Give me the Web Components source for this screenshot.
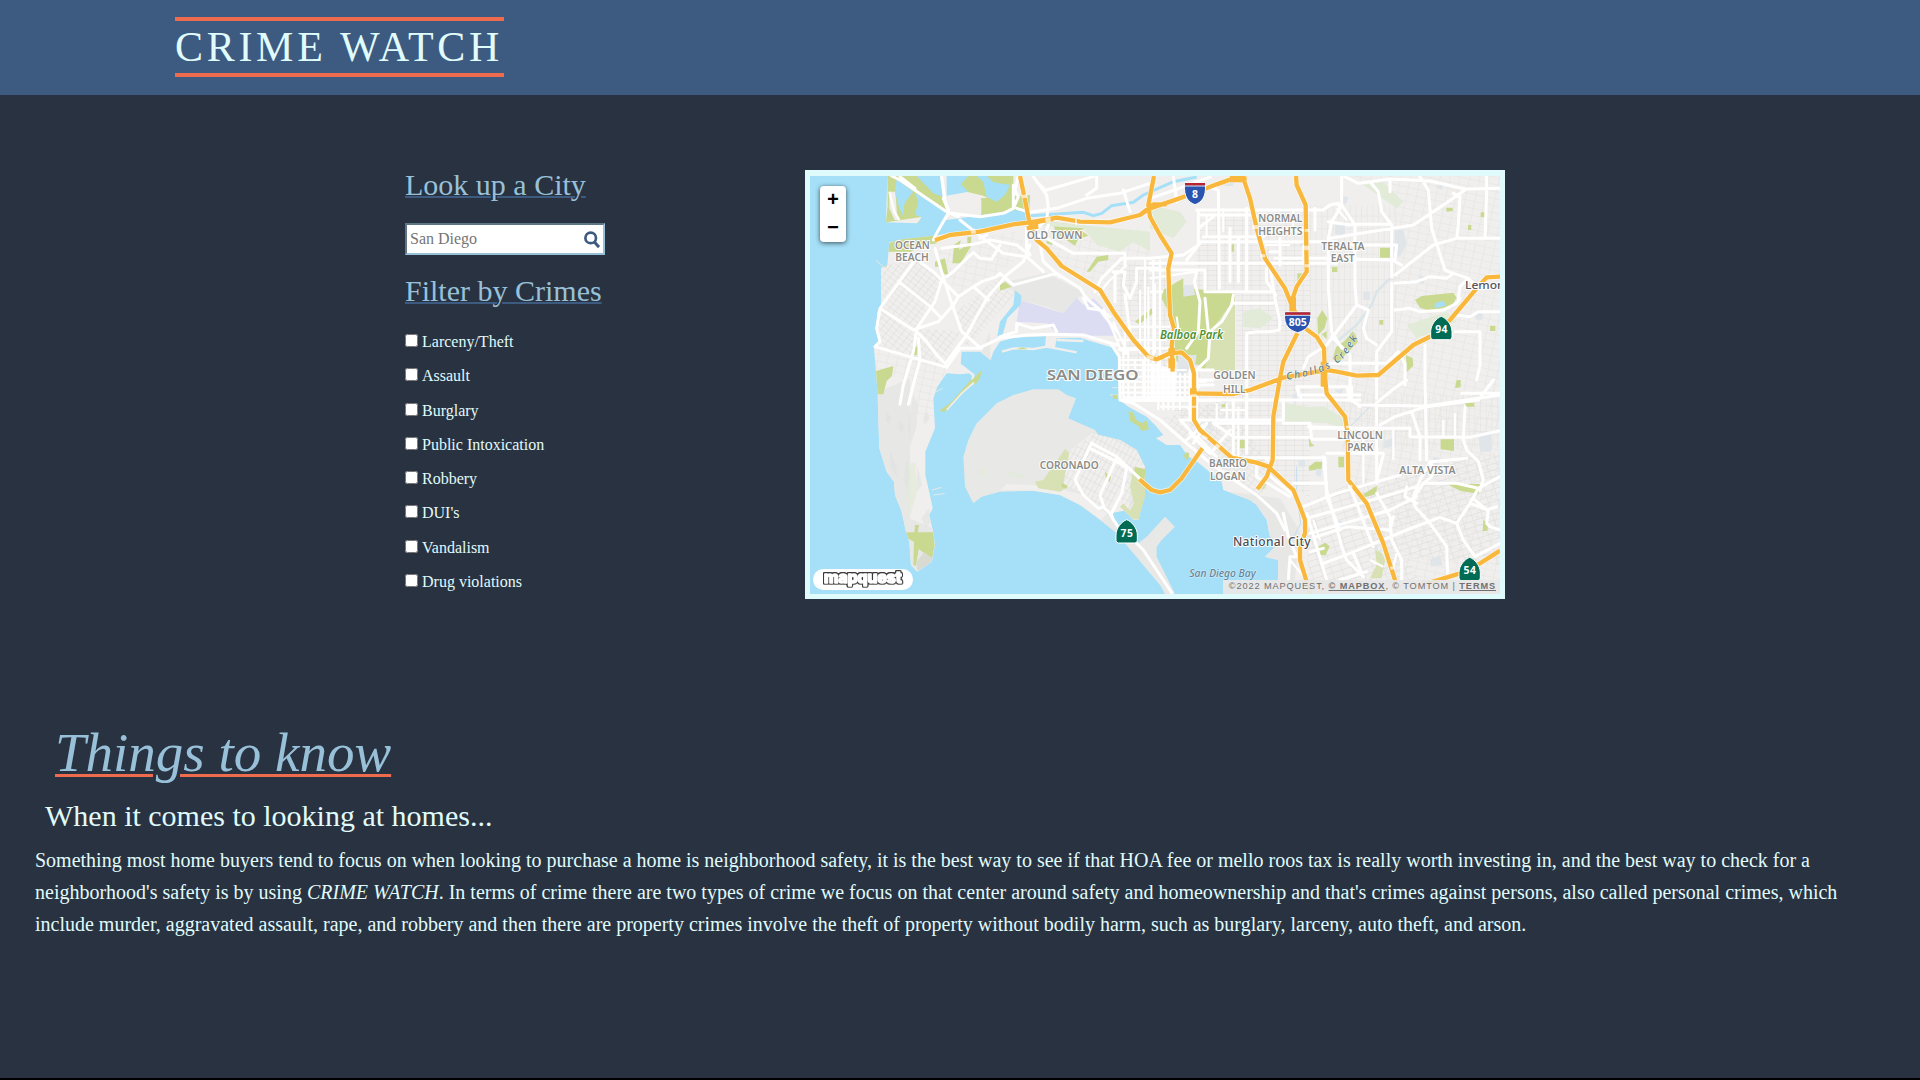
<!DOCTYPE html>
<html lang="en">
<head>
<meta charset="utf-8">
<title>Crime Watch</title>
<style>
html{background:#000}
body{margin:0;font-family:"Liberation Serif",serif;color:#e0fbfc;overflow:hidden}
</style>
</head>
<body>
<crime-app></crime-app>
<script>
const define=(name,html,setup)=>customElements.define(name,class extends HTMLElement{
  constructor(){
    super();
    const t=document.createElement('template');
    t.innerHTML=html;
    this.attachShadow({mode:'open'}).append(t.content.cloneNode(true));
    if(setup)setup(this,this.shadowRoot);
  }
});

define('site-header',`<style>
:host{display:block;box-sizing:border-box;height:95px;padding:17px 0 0 175px;background:#3d5a80}
h1{box-sizing:border-box;width:329px;height:60px;margin:0;border:solid #ee6c4d;border-width:4px 0;font-weight:400;font-size:42px;line-height:52px;letter-spacing:3.7px;white-space:nowrap}
</style><h1><slot></slot></h1>`);

define('section-title',`<style>
:host{display:block;height:34px}
h2{margin:0;font-weight:400;font-size:30px;line-height:34px;color:#98c1d9;text-decoration:underline 2px #3d5a80;text-underline-offset:1px;white-space:nowrap}
</style><h2><slot></slot></h2>`);

define('city-search',`<style>
:host{display:block;box-sizing:border-box;width:200px;height:32px;border:2px inset #98c1d9;background:#fff}
div{display:flex;align-items:center;justify-content:space-between;height:28px;padding:0 3px}
span{font-size:16px;line-height:18px;color:#757575}
svg{display:block}
</style><div><span><slot></slot></span><svg width="17" height="18" viewBox="0 0 17 18"><circle cx="7.7" cy="7.9" r="5.3" fill="none" stroke="#3d5a80" stroke-width="2.7"/><path d="M11.4 12L16 17.2" stroke="#3d5a80" stroke-width="3"/></svg></div>`);

define('crime-option',`<style>
:host{display:block;height:34.3px}
label{display:block;font-size:16px;line-height:18px;white-space:nowrap}
input{margin:0 4px 0 0;width:13px;height:13px;vertical-align:0}
</style><label><input type="checkbox"><slot></slot></label>`);

define('filter-panel',`<style>
:host{display:flex;flex-direction:column;width:200px}
city-search{margin:21px 0 19px}
.list{margin-top:25px}
</style>
<section-title>Look up a City</section-title>
<city-search>San Diego</city-search>
<section-title>Filter by Crimes</section-title>
<div class="list"></div>`,(h,r)=>{
  for(const n of ["Larceny/Theft","Assault","Burglary","Public Intoxication","Robbery","DUI's","Vandalism","Drug violations"]){
    const o=document.createElement('crime-option');o.textContent=n;r.querySelector('.list').append(o);
  }
});

define('map-zoom',`<style>
:host{display:flex;flex-direction:column;width:26px;height:56px;border-radius:4px;background:#fff;box-shadow:0 1px 5px rgba(0,0,0,.65);overflow:visible}
span{display:block;box-sizing:border-box;height:28px;font:bold 20px/29px "Liberation Mono",monospace;text-align:center;color:#000}
span:first-child{border-bottom:1px solid #ccc}
</style><span>+</span><span>−</span>`);

define('map-credit',`<style>
:host{display:flex;justify-content:flex-end;box-sizing:border-box;width:277px;height:14px;padding-right:4px;background:rgba(232,232,232,.94);font:9.2px/12px "Liberation Sans",sans-serif;letter-spacing:.9px;color:#707070;white-space:pre}
b{text-decoration:underline;text-underline-offset:1px}
</style><span>©2022 MAPQUEST, <b>© MAPBOX</b>, © TOMTOM | <b>TERMS</b></span>`);

/* Map artwork: units are thirds of a pixel. Quadrant groups share the offsets below. */
const NE='transform="translate(1050 0)"',SW='transform="translate(0 645)"',SE='transform="translate(1050 645)"',MID='transform="translate(600 435)"';
const grid=(id,w,h,a,c)=>`<pattern id="${id}" width="${w}" height="${h}" patternUnits="userSpaceOnUse" patternTransform="rotate(${a})"><path d="M0 0H${w}M0 0V${h}" stroke="${c}" stroke-width="3.4" fill="none"/></pattern>`;
const label=(x,y,w,s,t,extra='')=>`<text x="${x}" y="${y}" textLength="${w}" lengthAdjust="spacingAndGlyphs" font-size="${s}" ${extra}>${t}</text>`;
const inter=(x,y,w,h,t,tw)=>`<g transform="translate(${x} ${y})"><path d="M${-w/2} ${-h/2+3}L${-w/2+4} ${-h/2}H${w/2-4}L${w/2} ${-h/2+3}C${w/2+4} ${h*.2} ${w*.28} ${h*.4} 0 ${h/2}C${-w*.28} ${h*.4} ${-w/2-4} ${h*.2} ${-w/2} ${-h/2+3}Z" fill="#2a54b0" stroke="#fff" stroke-width="3"/><path d="M${-w/2+1} ${-h/2+1}H${w/2-1}V${-h/2+9}H${-w/2+1}Z" fill="#b9222f"/><path d="M${-w/2+1} ${-h/2+10}H${w/2-1}" stroke="#fff" stroke-width="2.5"/><text x="0" y="12" class="sh" text-anchor="middle" textLength="${tw}" lengthAdjust="spacingAndGlyphs" font-size="31">${t}</text></g>`;
const state=(x,y,t)=>`<g transform="translate(${x} ${y})"><path d="M0 -36C14 -31 32 -12 32 10V26Q32 34 24 34H-24Q-32 34 -32 26V10C-32 -12 -14 -31 0 -36Z" fill="#006c56" stroke="#fff" stroke-width="3"/><text x="0" y="15" class="sh" text-anchor="middle" textLength="37" font-size="31">${t}</text></g>`;

define('city-map',`<style>
:host{display:block;position:relative;box-sizing:border-box;width:700px;height:429px;border:solid #e0fbfc;border-width:6px 5px 5px}
svg{display:block}
.f{fill:none;stroke:#f9b83c;stroke-width:13;stroke-linejoin:round}
.c{fill:none;stroke:#fff;stroke-width:17;stroke-linejoin:round;opacity:.7}
.r{fill:none;stroke:#fff;stroke-width:9;stroke-linejoin:round;stroke-linecap:round}
.n{fill:none;stroke:#fff;stroke-width:6.5}
.g{fill:#c9d98f}.g2{fill:#d8e1b3}.g3{fill:#e2ebd8}.w{fill:#a5e0f8}.b{fill:#e0e5ea}
.t text{font-family:"Noto Sans",sans-serif;font-weight:600;fill:#8b8b87;stroke:#fff;stroke-width:6;stroke-linejoin:round;paint-order:stroke}
.sh{font-family:"Noto Sans",sans-serif;font-weight:700;fill:#fff}
.logo{filter:drop-shadow(2.6px 0 0 #3a3a3c) drop-shadow(-2.6px 0 0 #3a3a3c) drop-shadow(0 2.6px 0 #3a3a3c) drop-shadow(0 -2.6px 0 #3a3a3c)}
map-zoom{position:absolute;left:10px;top:10px}
map-credit{position:absolute;right:0;bottom:0}
</style>
<svg width="690" height="418" viewBox="30 33 2070 1254">
<defs>
${grid('ga',19,14,38,'#dedddc')}${grid('gb',26,15,0,'#e0dfdd')}${grid('gc',14,24,28,'#dcdcdc')}${grid('gd',30,18,-18,'#e0dfdd')}${grid('ge',17,38,0,'#e3e2e0')}${grid('gh',29,21,12,'#e4e3e1')}
<clipPath id="land"><path d="M268 232L310 222L400 212L480 200L600 180L690 165L1050 200V33H2100V1287H1433L1435 1185L1395 1175L1435 1135L1410 1115L1400 1065L1370 1020L1350 1005L1270 975L1265 950L1185 885L1165 875L1140 840L1100 840L1068 820L1090 810L1065 780L1040 755L985 725L958 705V570L945 550L870 528L840 518L770 520L765 548L735 545L738 514L640 518L600 530L580 560L572 585L540 560L485 560L482 600L510 625L478 628L440 625L412 665L400 700L405 790L376 860V930L392 1000L398 1030L388 1050L400 1105L405 1140L395 1190L352 1220L333 1200L328 1130L318 1100L305 1040L285 990L282 950L260 920L238 850L236 790L233 690L228 620L222 550L240 530L228 500L232 440L243 420V310L262 300Z"/></clipPath>
</defs>
<path class="w" d="M30 33H2100V1287H30Z"/>
<path fill="#f0efed" d="M262 33H2100V400H1000L690 165L690 148L540 158L440 172L340 188L345 175L258 172Z"/>
<g clip-path="url(#land)">
 <path fill="#f0efed" d="M30 33H2100V1287H30Z"/>
 <path fill="url(#ga)" d="M245 300L360 285L430 340L405 430L345 490L235 440ZM345 490L480 500L440 600L230 545L235 440ZM470 440L600 330L660 370L500 550Z"/>
 <path fill="url(#gh)" d="M220 540L440 600L400 760H350V650L220 620ZM690 165L1050 200V430L780 300ZM400 250L640 200L700 250L480 400Z"/>
 <path fill="url(#gb)" d="M940 300H1110V620H960ZM1190 130H1530V700H1310V380H1190ZM1310 640H1530V1000L1180 760ZM960 600H1200V800Z"/>
 <path fill="url(#ge)" d="M1530 120H1790V560H1530ZM1560 690H2100V850H1640Z"/>
 <path fill="url(#gh)" d="M1650 33H2100V560H1780V100ZM1560 560H2100V1287H1780L1650 950Z"/>
 <path fill="url(#gd)" d="M1510 1010L1700 940L1880 1287H1530ZM1720 940L2100 860V1200L1800 1180Z"/>
 <path fill="url(#ga)" d="M1090 760L1280 700L1430 940L1370 1000L1200 870Z"/>
 <path fill="#e7e7e6" d="M235 680L330 640L330 1060L398 1090L400 1210L330 1215L220 900ZM620 350L740 325L860 385L830 400L790 445L740 425L660 405ZM570 500L572 590L540 570ZM1290 980L1440 1000L1500 1100L1480 1287H1380Z"/>
 <path fill="#dddfdf" opacity=".5" d="M260 740l15 20-8 18-10-12zM300 770l12 12-6 22-12-16zM340 690l14 30-6 70-16 50-8-60zM370 760l12-20 6 20-14 22zM320 880l10 40-5 55-14-30zM270 860l18 40 5 40-20-32zM365 1060l22-30 5 40-14 20zM352 900l14 60-16 20z"/>
 <path fill="#dcddf2" d="M660 405L790 445L830 398L850 420L880 400L910 430L950 500L940 512L870 512L770 505L740 475L650 470Z"/>
 <path class="g" d="M262 236l55-20 95-6 0 25-40 5-40 20-70 0-2 45-12 0zM462 240l20-15-5 30 25-15 0-25 12 0-2 30-30 50-25 0zM405 290l30-10 10 50-20-5-5-20-15 0zM600 360l15-10 20 15-35 12zM336 545l18 0-4 25-14 0zM228 618l52-15-4 30-16 15-10 40h-20zM760 170l95 12-10 15 20 15-30 10-10 20-45-30-10 10zM740 225l20 5-4 10-16-5zM860 320l30-45 35-5 0 15-30 5-25 30zM1005 470l50-40 4 15-40 33zM318 1102h82l4 40-8 40-40-30-8 50-8-2 2-70-20-10zM345 1080h12l-4 25h-10z"/>
 <path fill="#d9dbd3" d="M350 1190L372 1162L398 1180L390 1200L352 1218Z"/>
 <path class="g3" opacity=".7" d="M326 895l20 0 6 80-20 75-12-50z"/>
 <path class="g2" d="M838 110L970 85L985 125L920 150L850 145Z"/>
 <path class="g3" d="M690 180L780 165L1020 170L1050 180L1050 260L1000 230L960 260L890 240L850 190ZM1050 120l90 20 20 30-40 50-70-30zM1690 60l60-10 60 60-20 20z"/>
 <g ${NE}>
  <path class="g" d="M100 370L255 380V530L250 600L240 618H160L150 600L80 590L60 450L35 400L40 375L100 340Z"/>
  <path class="g2" d="M180 500L255 400V615H165Z"/><path class="b" d="M100 360h30l5 30-35 5zM85 570h55l-5 30-55 50zM735 195h25l10 40-20 40-18-10z"/>
  <path class="g" d="M690 248h30v30h-30zM242 238h10v22h-10zM888 128h20v10l-18 2zM992 142h15v14h-15zM954 180h10v15h-10zM546 306h16v15h-16zM442 325h15l-4 25-11 0zM502 460l15-25 15 25-8 30-20 20zM548 582l10-35 25-18 25-30 8 10 8 22-38 38-20 22zM795 405l20-12 95-10 10 15-15 25-65 15-30-10zM768 570l20 10 2 22-20 20zM688 465h12v14h-12zM1020 482h16v16h-16zM515 508l15-10v25z"/>
  <path fill="#a9def8" d="M855 415l25-8 8 15-35 8z"/>
  <path class="b" d="M555 180h30v32l-30-5zM575 90l20 8-8 20-15-5zM810 330l15 8-5 20-14-5zM855 65l25-10-4 20zM390 130h30v15h-30zM450 225h16v20h-16zM640 380h20v25h-20zM980 440l20 8-5 18-20-4zM220 45h30v18h-30z"/>
  <path class="g3" d="M770 480L890 440L920 470L800 520ZM280 440l50-10 40 30-40 30-50-5z"/>
  <path fill="none" stroke="#d9e5ea" stroke-width="7" d="M720 340L680 380L665 420L620 480L560 530"/>
 </g>
 <g ${SE}>
  <path class="g3" d="M405 68L470 82L520 78L580 115L590 140L560 138L530 130L405 125Z"/>
  <path class="g" d="M270 180h14v25h-14zM872 178h40v35l-40-5zM565 230h17v32h-17zM476 260l20-15 22 0-4 22-36 5zM636 345l45-28-2 25-42 12zM505 500l20-12 14 10-12 28-18 0zM890 312h100l-5 30-55-10zM1000 420l15 8-3 25-14 0zM945 68h28v12h-24zM920 0h12v22l-17 2zM215 73h15v9h-15zM476 165l8 25 10 8-16 2zM100 215l18 5-8 18-10-5z"/>
  <path class="g2" d="M675 505l20 15 10 20-10 55-35 0 20-40zM330 300h25l-12 28h-15z"/>
  <path class="b" d="M700 185l35-15-4 30-30 5zM985 160l40-5-2 60-33 0zM560 420l30 10-5 20-20-4zM660 500l20-5 5 20zM840 540l30-15 8 30-35 5zM435 80l-10-35 20-8zM445 240h20v20h-20zM160 135l25-12 0 30zM555 30l25-4-5 25zM850 230l18 5-5 20-14-4zM500 265l16 5-4 20-15-5z"/>
  <path fill="none" stroke="#c4def0" stroke-width="3" d="M440 260v80l12 90-30 60M600 140l60-60"/>
 </g>
</g>
<path class="g" d="M262 33H370L440 110L446 138L420 170L340 188L368 155L258 172L263 120ZM543 100L690 90L688 148L543 158ZM490 33H640V95L600 120L550 92L500 80L440 88L480 60Z"/>
<path fill="#f0efed" d="M268 80h18l5 70 8 15-15 0-16-35zM440 100l50-14 54 18v40l-104 10zM690 33H900L850 90L720 110Z"/>
<path class="w" d="M290 42L340 80L322 102L312 120L310 155L295 120L285 80ZM345 84L435 135L435 168L350 182L365 155L345 150L355 110ZM350 33H420L428 95L400 85ZM440 33H505L482 58L505 80L440 92ZM530 33H560L580 52L630 60L615 90L590 110L560 95L550 50Z"/>
<path class="w" d="M300 180L440 165L690 130V168L480 200L310 222Z"/>
<path fill="none" stroke="#a5e0f8" stroke-width="9" d="M690 152L760 148L850 142L880 152L905 145L935 122L1000 112L1030 90L1120 50L1190 36"/>
<path class="w" d="M645 376L665 392L661 420L622 460L605 520L592 512L600 470L640 420Z"/>
<path fill="none" stroke="#f0efed" stroke-width="7" d="M606 560L640 550L700 552L740 545L830 562M482 600L520 630L516 660M770 525L850 528"/>
<path class="g" d="M516 645L545 615L540 640L525 660ZM648 553l20-6 15 6zM528 645l-55 55-38 40-18-2 35-25 60-68z"/>
<path fill="none" stroke="#f0efed" stroke-width="5" d="M522 652L485 685L440 735"/>
<path fill="none" stroke="#e6e8e8" stroke-width="3" d="M228 286l25 22M395 975l30-8M400 990l34-4M408 680l20-10M930 690h25M935 668h20"/>
<g ${SW}>
 <path fill="#e8e8e7" d="M490 230L505 180L530 130L590 70L640 45L700 28L775 28L800 45L828 55L805 115L885 150L895 165L960 180L1010 210L1035 260V345L1015 420L1000 420L960 380L945 395L932 405L960 440L1015 490L1040 470L1095 410L1125 440L1085 480L1070 500V530L1125 642H1095L1080 615L1050 580L1000 520L950 460L900 420L840 375L780 345L700 332L600 335L545 350L520 370L495 320Z"/>
 <path fill="#f0efed" d="M600 330L620 312L700 315L790 330L850 345L920 400L905 420L840 375L780 345L700 332Z"/>
 <path class="g3" opacity=".6" d="M540 265l20 5-10 22-15-8zM625 270l50 15 0 10-50-5z"/>
 <path fill="#f0efed" d="M800 220L875 160L960 180L1010 210L1035 262L1000 280L985 390L930 400L850 350L790 310Z"/>
 <path fill="url(#gc)" d="M800 220L885 160L960 180L1010 210L1030 250L1000 280V370L985 390L950 340L930 395L900 390L850 350L790 310Z"/>
 <path class="g2" d="M795 207L808 220L790 310L803 320L780 335L715 325L705 305L730 300ZM1000 262L1035 270L1035 350L1015 418L1000 418L960 380L970 370L990 392L1002 370L990 320Z"/>
 <path class="g" d="M1005 260L1037 268L1032 300L1005 290ZM915 275l18 15-4 15-12-10zM785 308l18 10-5 8-14-5z"/>
 <path class="r" d="M875 188L825 300L850 345L895 385L912 382L935 405L940 420M875 190L950 230L1022 298M870 205L960 250L980 265L965 340L932 405M950 235L900 345L912 382M932 405L960 450M1005 485L1030 510L1115 638"/>
</g>
<g ${MID}>
 <path class="g" d="M338 255l14 0 0 12h-12zM385 305l14 0 10 25 18 10 12-10 8 28-22 5-10-15-25-15zM550 435l14-8 4 14-10 10z"/>
</g>
<!-- streets -->
<path class="r" d="M275 33L300 45L380 100L440 140L475 155M300 35L345 70M425 36L435 105L447 140L410 205L400 225M430 100L442 130M655 33L645 75L655 95L640 130L610 145L540 155L455 145M650 130L690 142L770 130L860 100L960 85L1050 55M480 165L550 220L610 265L680 275L730 320M425 250L520 238L570 225L650 240L690 270L680 250V190M690 240L670 290L620 330L560 400L500 510L440 590M405 250L425 320L450 400L485 500L540 548L600 520L680 510L760 508L850 510L950 540M430 350L475 395L520 365L545 350L590 335L600 325L640 360L770 325L840 370L860 400L900 435L930 455M440 335L460 320L480 300L520 262L540 280L575 283L600 240M345 280L400 320L425 345M345 285L240 430L340 495L415 470L460 420L475 395M296 350L390 425L420 455M425 345L405 410L350 490L340 560L310 660L300 718M240 430L230 490L240 530L225 545L440 607L480 550H545M350 500L380 530L410 570L440 600M355 520L360 585L345 640L325 718M520 365L565 405M850 400L865 430L900 435L950 500M600 515L650 500V475L700 490L760 480L770 500M700 35L740 90L745 130L740 160L715 190M710 50L735 75M740 75L880 35M890 35V70L860 90M970 75L990 140M715 210L730 290L780 335M740 220L820 265H975V300M745 180L730 220M885 380L905 340L965 280H1050M940 320H975L970 360L990 400L1010 350V310H1080M945 320V410M975 390L990 500M560 210L540 220M640 130L640 60"/>
<path class="n" d="M268 80l15 60 15 25M1035 285V700M1060 285V700M1080 285V600M910 430l55 130M940 470l45 100M975 500v70M990 485H1110M955 550H1110M980 300l-55 50 -30 40"/>
<g ${NE}>
 <path class="r" d="M0 100L60 80L180 36M70 33L80 110M205 75L208 370M205 75L190 70M140 135H520L540 120L565 115L570 130L545 170L535 220V370L545 500L575 550M145 150H300M145 135V240L100 270L0 280M145 190L190 155M160 215H340M150 230H560M0 295H560M0 315H165M290 130V380M240 190V350M265 215V350M325 195H470M390 220V300M360 260H390M375 280H550M495 130V195M150 235L110 285M165 320V380M165 380H370M245 415H375M250 390L245 420L215 470L180 500L175 580L140 615M140 320L133 350L150 410L145 500L110 550M165 400L175 500M360 300L375 400L390 470L388 495L360 500H320L290 505V700M350 310V350L378 390M535 170L600 180M575 33V120L615 180V360L620 420L530 540L475 575L460 610M580 33L625 55L660 50L720 42L840 48L945 72L1050 70M660 50L685 80L695 140L725 180V335M720 45V80M810 36L835 75L845 190L885 315L910 325L955 340M945 75L880 120L790 180L600 210L540 220M605 178H720M600 240H740L735 285L620 283M735 290L755 300M735 330L850 240L920 220H1050M910 85L930 95L925 180L920 220M1010 33L1010 80L1005 220M735 355L800 350L840 335L890 340L910 325M735 435L780 430L810 440L880 435L920 415L930 400M725 355V500L680 560V700M620 420L655 435L640 490L650 520L680 540M545 515L600 570V660M540 595H710L745 560L765 595V660M985 440L960 455L920 450M985 440H1050M915 500H990V600L980 645M825 540V645M955 340L985 370M955 340L930 365L925 400"/>
 <path class="n" d="M320 150V190M220 130V200M170 150V215M460 240V300M0 340L140 320M0 380H40M560 130L590 165M345 240H420M430 135V195"/>
</g>
<g ${MID}>
 <path class="n" d="M370 120V270M385 115V270M405 150V270M430 150V270M445 140V270M455 160V270M475 150V300M490 170V300M505 160V300M520 180V300M540 190V300M555 190V270M360 150H450M360 165H480M360 180H560M360 200H580M360 215H620M360 232H600M360 248H580M370 262H580M380 272H660M480 290H570M355 120H450M420 -60V130M445 -70V130M465 -80V130M350 90H500"/>
 <path fill="#fff" opacity=".8" d="M470 160L530 185V265H455V190Z"/>
 <path class="r" d="M335 105L358 140L360 270L400 280L480 330L560 400L620 450L680 495L770 555L830 610L855 660M370 270H1080M590 180H640M590 210H640M590 225H640M540 330L560 350L600 400L650 440M545 330H850V270M570 180V330M590 190V340M700 270V470M740 270V430M645 340H820M700 382H930M700 443H975M850 340H930L935 388H1080M930 355H1080M640 340L700 380M690 360L640 420M620 340L580 400M570 370L630 430M560 390L610 345M770 470V500L870 560M800 490L880 555M975 443L980 560L1020 660M880 520H980M895 230V255H1080M1055 230V270L1080 290"/>
 <path class="n" d="M650 280V330M680 280V340M715 290V440M660 300H740M610 360L660 410M595 380L640 430M530 20L540 90M560 290L600 340"/>
</g>
<g ${SE}>
 <path class="r" d="M440 20H590L600 60L630 75L830 78L1050 45M440 22L455 60M680 70V310M600 0V60M680 68L740 20L770 0M825 0L830 240M475 140L600 145L780 145V170L960 172L1050 152M785 95L800 140L810 170V240M690 135L735 110L830 80L985 60M935 40H1050M985 60L1030 0M945 80L940 180L950 210L985 245L1000 300L990 330M530 220H700M700 223L680 300M840 245L810 300L790 350L795 380L840 430L890 500L893 590M845 245L950 235M845 245V290L820 310L790 355M820 310L920 310L985 325L1050 290M985 325L960 370L920 430L870 412L770 450L600 520L520 550M460 380L560 340L750 285M470 415L700 350L800 320M480 460L720 390L800 350M500 470L590 440L720 450L730 410M520 230L530 330L575 500L590 540L640 590M600 320L620 370L650 450L670 500M680 340L720 410L725 480L755 540V600M470 400L500 500L530 600M520 505L480 515M400 400L415 470L440 530L420 530L412 640M770 320L765 350L800 370M960 370L1015 390L1010 430L1020 440L1050 450M920 430L940 480L975 530L1050 490M975 360L1010 390L1040 380M610 520L640 590M570 600L650 575"/>
 <path class="n" d="M490 420L510 480M420 540L470 600M660 540L700 560M740 520L730 560M880 120V170M915 100V170M730 150V240M640 170V310"/>
</g>
<g id="fw"></g>
<g fill="#fff" opacity=".65"><path d="M735 158l16-2 2 14-16 2zM665 90l16-2 2 10-16 2zM512 193l14-2 2 14-14 2zM825 162h6v18h-6zM1356 180l18 0 0 12-16 0zM1380 268h16v9h-16zM1514 192h14v8h-14zM1512 242h16v12h-16zM1514 298h14v9h-14zM1515 250h10v6h-10zM1250 835l12 8-8 10-12-8zM1210 810l14 8-4 8-14-6zM1720 1130l14-4 3 8-14 5zM1770 1205l14-2 2 8-14 4zM1638 782h14v8h-14zM1645 960h12v8h-12zM1395 880l14 2-2 12-12-4zM1040 570l22 4-2 10-20-2zM1172 688h18v8h-18zM1172 722h18v6h-18z"/></g>
<g class="t">
${label(285,251,104,31,'OCEAN')}${label(286,288,100,31,'BEACH')}${label(680,221,167,32,'OLD TOWN')}
${label(740,645,276,45,'SAN DIEGO')}
<g ${NE}>${label(325,170,132,32,'NORMAL')}${label(325,209,132,32,'HEIGHTS')}${label(514,254,130,31,'TERALTA')}${label(542,291,72,31,'EAST')}${label(190,642,127,31,'GOLDEN')}
${label(945,372,119,34,'Lemon','style="fill:#55555a;font-weight:500"')}
${label(30,521,189,35,'Balboa Park','style="fill:#4c9133;font-style:italic"')}</g>
<g ${SE}>${label(219,38,68,31,'HILL')}${label(562,176,137,31,'LINCOLN')}${label(592,214,78,31,'PARK')}${label(748,281,169,32,'ALTA VISTA')}${label(177,262,114,31,'BARRIO')}${label(180,300,107,31,'LOGAN')}
<text x="249" y="498" textLength="233" font-size="36" style="fill:#4d4d52;font-weight:500">National City</text>
${label(118,591,199,33,'San Diego Bay','style="fill:#63849a;font-style:italic;font-weight:500;stroke:#d9f0fa;stroke-width:3"')}</g>
${label(719,911,177,31,'CORONADO')}
<path id="creek" d="M1460 644Q1570 630 1622 588Q1665 545 1690 478" fill="none"/>
<text font-size="31" style="fill:#617f88;font-style:italic;font-weight:500;stroke-width:2"><textPath href="#creek" textLength="260">Chollas Creek</textPath></text>
</g>
${inter(1185,86,62,66,'8',18)}${inter(1493,472,78,62,'805',54)}${state(1924,490,'94')}${state(980,1100,'75')}${state(2009,1213,'54')}
<rect x="39" y="1212" width="300" height="63" rx="31" fill="#fff"/>
<g class="logo"><text x="72" y="1255" textLength="233" lengthAdjust="spacingAndGlyphs" font-family="Inter,sans-serif" font-weight="800" font-size="45" fill="#fff" stroke="#fff" stroke-width="4.5" stroke-linejoin="round">mapquest</text></g>
</svg>
<map-zoom></map-zoom><map-credit></map-credit>`,(h,r)=>{
  const roads=[
    'M405 226L450 210L540 200L640 178L690 172L770 158L840 170L930 172L1020 150L1050 130L1130 103L1180 85L1250 58L1290 44L1340 40',
    'M660 33L672 90L688 170L710 225L740 250L785 303L900 375L940 440L1000 525L1045 575L1070 583L1110 565L1145 562L1170 585L1182 625V765L1200 795L1295 878L1370 893L1405 905L1480 975L1500 1025L1515 1065V1105L1500 1145V1185L1520 1250L1530 1287',
    'M690 178L725 168L760 162M680 190L715 185M1070 583L1090 575M1020 150L1060 118L1100 118',
    'M1062 33L1045 120L1050 155L1080 210L1115 265L1105 310L1110 450L1122 490L1115 540L1118 620',
    'M1330 40L1350 100L1370 190L1395 280L1455 370L1475 420L1490 450',
    'M1492 505L1450 590L1440 640L1420 755L1418 885L1400 935L1372 973',
    'M1488 33L1490 60L1517 120L1520 320L1490 365L1478 400V440',
    'M1515 490L1550 515L1572 550L1575 640L1580 685L1635 755L1643 805L1645 945L1700 1015L1750 1135L1785 1245L1795 1287',
    'M1170 685L1300 687L1350 675L1450 638L1580 615L1610 620L1670 632L1735 630L1840 540L1900 510L1950 465L2030 370L2060 337L2100 335',
    'M1018 943L1055 975L1080 982L1110 975L1145 940L1207 850',
    'M1850 1265L1980 1225L2040 1195L2100 1157'];
  const d=roads.join('');
  r.querySelector('#fw').innerHTML=`<path class="c" d="${d}"/><path class="f" d="${d}"/><path class="f" style="stroke-width:20" d="M1478 395V440M1572 590V665M1170 680H1190M1105 560H1125M1290 42H1335M1115 580V610"/>`;
});

define('home-article',`<style>
:host{display:flex;flex-direction:column;align-items:flex-start;padding:5px 0 0 35px;white-space:nowrap}
h2{margin:0 0 0 20px;font-weight:400;font-style:italic;font-size:55px;line-height:61px;color:#98c1d9;text-decoration:underline 3px #ee6c4d;text-underline-offset:3px}
h3{margin:16px 0 0 10px;font-weight:400;font-size:30px;line-height:34px}
p{margin:11px 0 0;font-size:20px;line-height:32px}
</style>
<h2>Things to know</h2>
<h3>When it comes to looking at homes...</h3>
<p>Something most home buyers tend to focus on when looking to purchase a home is neighborhood safety, it is the best way to see if that HOA fee or mello roos tax is really worth investing in, and the best way to check for a<br>neighborhood's safety is by using <em>CRIME WATCH</em>. In terms of crime there are two types of crime we focus on that center around safety and homeownership and that's crimes against persons, also called personal crimes, which<br>include murder, aggravated assault, rape, and robbery and then there are property crimes involve the theft of property without bodily harm, such as burglary, larceny, auto theft, and arson.</p>`);

define('crime-app',`<style>
:host{display:flex;flex-direction:column;height:1078px;background:#293241}
main{display:flex;gap:200px;padding:75px 0 0 405px;height:547px;align-items:flex-start}
filter-panel{margin-top:-2px}
</style>
<site-header>CRIME WATCH</site-header>
<main><filter-panel></filter-panel><city-map></city-map></main>
<home-article></home-article>`);
</script>
</body>
</html>
